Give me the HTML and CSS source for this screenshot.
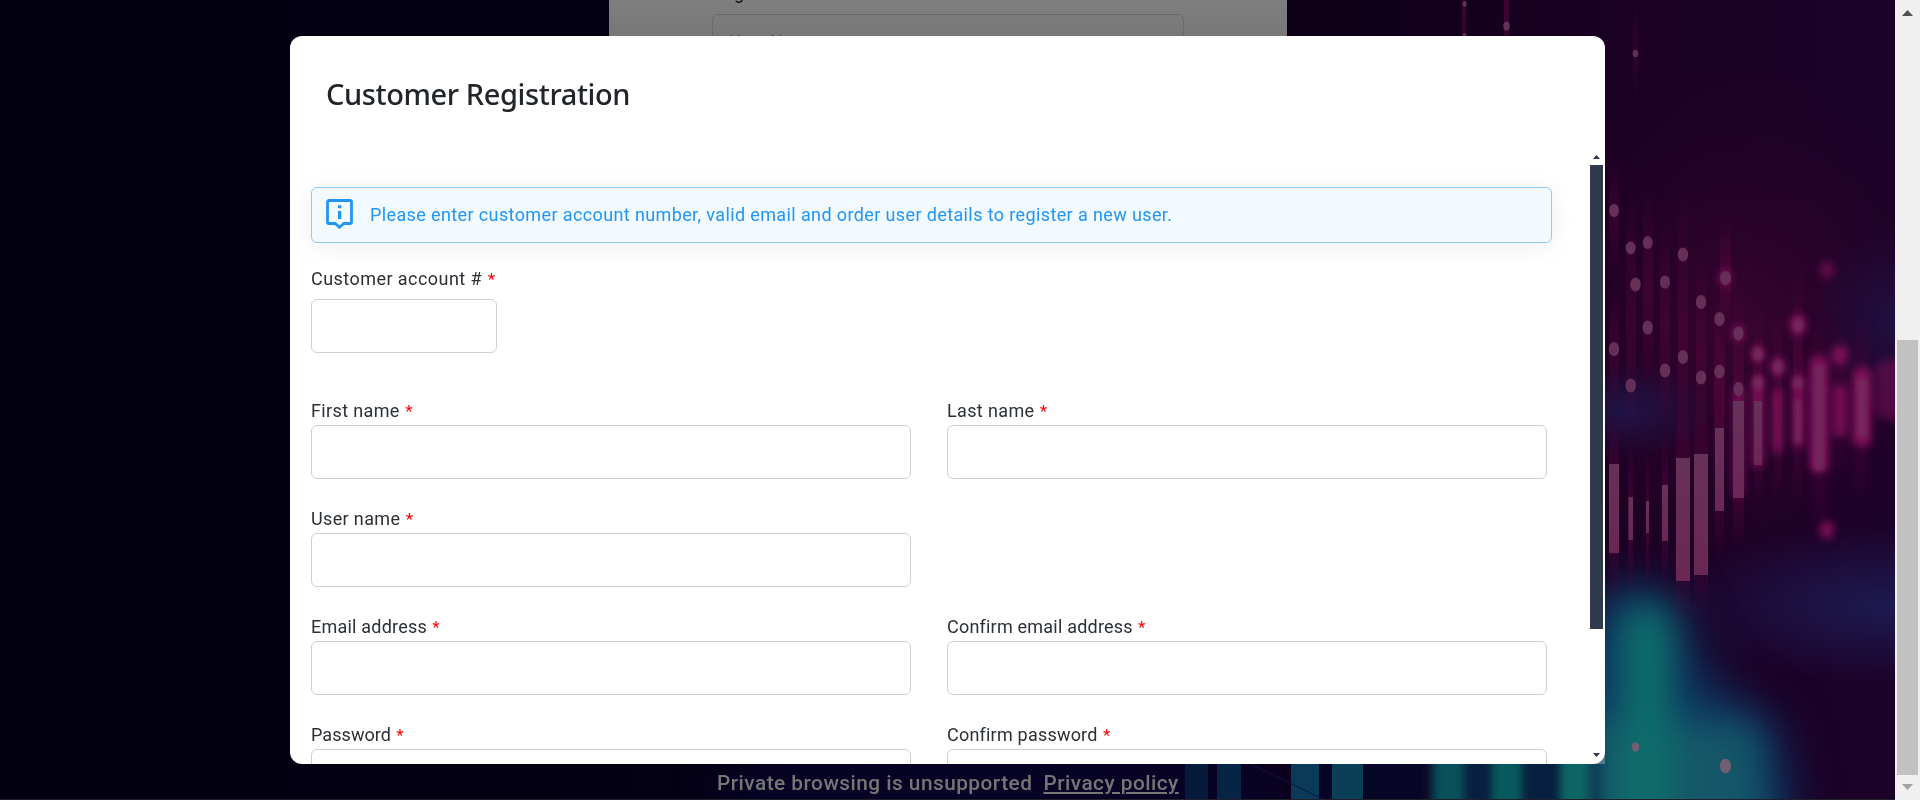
FILE: index.html
```html
<!DOCTYPE html>
<html lang="en">
<head>
<meta charset="utf-8">
<title>Customer Registration</title>
<link rel="stylesheet" href="styles.css">
</head>
<body>
<div class="viewport">
  <div class="page">
    <svg class="backdrop" viewBox="0 0 1895 800" width="1895" height="800" aria-hidden="true">
      <defs>
        <linearGradient id="base" x1="0" x2="1" y1="0" y2="0">
          <stop offset="0" stop-color="#030012"/><stop offset=".33" stop-color="#040013"/><stop offset=".7" stop-color="#0e0019"/><stop offset=".86" stop-color="#1b0024"/><stop offset="1" stop-color="#1c0229"/>
        </linearGradient>
        <linearGradient id="streak" x1="0" x2="0" y1="0" y2="1">
          <stop offset="0" stop-color="#5a0640" stop-opacity="0"/><stop offset=".5" stop-color="#5a0640" stop-opacity=".6"/><stop offset="1" stop-color="#5a0640" stop-opacity="0"/>
        </linearGradient>
        <linearGradient id="bar" x1="0" x2="0" y1="0" y2="1">
          <stop offset="0" stop-color="#663158"/><stop offset="1" stop-color="#6b2754"/>
        </linearGradient>
        <radialGradient id="wine"><stop offset="0" stop-color="#36042f"/><stop offset="1" stop-color="#2a0228" stop-opacity="0"/></radialGradient>
        <radialGradient id="indigo"><stop offset="0" stop-color="#1d1a50"/><stop offset="1" stop-color="#1d1a50" stop-opacity="0"/></radialGradient>
        <filter id="b2" color-interpolation-filters="sRGB" filterUnits="userSpaceOnUse" x="1700" y="200" width="260" height="400"><feGaussianBlur stdDeviation="2.2"/></filter>
        <filter id="b4" color-interpolation-filters="sRGB" filterUnits="userSpaceOnUse" x="1380" y="200" width="560" height="640"><feGaussianBlur stdDeviation="4"/></filter>
        <filter id="b16" color-interpolation-filters="sRGB" filterUnits="userSpaceOnUse" x="500" y="450" width="1450" height="500"><feGaussianBlur stdDeviation="17"/></filter>
        <filter id="b30" color-interpolation-filters="sRGB" filterUnits="userSpaceOnUse" x="1300" y="400" width="700" height="600"><feGaussianBlur stdDeviation="24"/></filter>
      </defs>
      <rect width="1895" height="800" fill="url(#base)"/>
      <ellipse cx="1740" cy="330" rx="230" ry="270" fill="url(#wine)"/>
      <ellipse cx="1900" cy="320" rx="90" ry="90" fill="url(#indigo)" opacity=".6"/>
      <ellipse cx="1890" cy="605" rx="230" ry="80" fill="url(#indigo)"/>
      <ellipse cx="1625" cy="410" rx="85" ry="48" fill="url(#indigo)" opacity=".75"/>
      <ellipse cx="1000" cy="790" rx="300" ry="50" fill="#06052c" opacity=".7" filter="url(#b16)"/>
      <g filter="url(#b30)">
        <path d="M1540 900V700L1605 585H1665L1710 680L1780 730L1800 900Z" fill="#0d3560"/>
      </g>
      <g filter="url(#b16)">
        <path d="M1580 900V720H1690L1755 725L1775 900Z" fill="#155768"/>
        <rect x="1620" y="605" width="52" height="300" rx="22" fill="#0e6e6b"/>
      </g>
      <g fill="url(#streak)">
        <rect x="1462" y="-30" width="4" height="90"/><rect x="1504" y="-60" width="5" height="140"/>
        <rect x="1633" y="0" width="5" height="102" opacity=".5"/>
        <rect x="1609" y="155" width="10" height="120" opacity=".6"/><rect x="1609" y="290" width="10" height="120" opacity=".6"/>
        <rect x="1626" y="190" width="10" height="260" opacity=".6"/><rect x="1643" y="190" width="10" height="200" opacity=".7"/>
        <rect x="1660" y="225" width="10" height="200" opacity=".7"/><rect x="1678" y="190" width="10" height="290" opacity=".7"/>
        <rect x="1696" y="245" width="10" height="220" opacity=".7"/><rect x="1720" y="220" width="11" height="110"/>
        <rect x="1714" y="290" width="11" height="190"/><rect x="1733" y="280" width="11" height="240"/>
        <rect x="1753" y="300" width="10" height="210"/><rect x="1773" y="310" width="9" height="190"/>
        <rect x="1793" y="265" width="10" height="240"/>
        <rect x="1609" y="410" width="10" height="190"/><rect x="1628" y="440" width="5" height="155"/>
        <rect x="1646" y="450" width="3" height="140"/><rect x="1662" y="430" width="6" height="160"/>
        <rect x="1676" y="400" width="14" height="225"/><rect x="1694" y="400" width="14" height="220"/>
        <rect x="1715" y="370" width="9" height="190"/><rect x="1733" y="370" width="11" height="180"/>
      </g>
      <g fill="url(#streak)" filter="url(#b4)">
        <rect x="1812" y="310" width="14" height="230"/><rect x="1834" y="320" width="12" height="160"/><rect x="1854" y="315" width="14" height="190"/>
      </g>
      <g fill="#82105b" filter="url(#b4)">
        <rect x="1810" y="356" width="18" height="116" rx="6"/><rect x="1853" y="368" width="18" height="78" rx="6"/>
        <rect x="1834" y="386" width="12" height="50" opacity=".9"/><rect x="1876" y="360" width="44" height="60" rx="10" opacity=".5"/>
        <rect x="1773" y="390" width="9" height="62"/><rect x="1793" y="385" width="10" height="62"/>
        <rect x="1753" y="380" width="10" height="86"/><rect x="1733" y="387" width="11" height="108" opacity=".7"/>
        <ellipse cx="1827" cy="270" rx="7" ry="9" opacity=".7"/><ellipse cx="1840" cy="355" rx="8" ry="10"/>
        <ellipse cx="1827" cy="530" rx="7" ry="9"/><ellipse cx="1798" cy="325" rx="8" ry="11"/>
        <ellipse cx="1758" cy="354" rx="6" ry="9"/><ellipse cx="1778" cy="367" rx="7" ry="10"/>
        <ellipse cx="1758" cy="383" rx="6" ry="9"/><ellipse cx="1798" cy="383" rx="6" ry="9"/>
        <ellipse cx="1738" cy="333" rx="6" ry="8"/><ellipse cx="1725" cy="278" rx="6" ry="8"/>
      </g>
      <g fill="#72285a" filter="url(#b2)">
        <rect x="1814" y="366" width="10" height="104"/><rect x="1857" y="379" width="10" height="58"/>
        <rect x="1795" y="400" width="6" height="42"/>
        <ellipse cx="1798" cy="325" rx="5" ry="7"/><ellipse cx="1798" cy="383" rx="5" ry="6"/>
        <ellipse cx="1778" cy="367" rx="5" ry="7"/><ellipse cx="1758" cy="354" rx="5" ry="7"/>
        <ellipse cx="1758" cy="383" rx="5" ry="7"/>
      </g>
      <g fill="url(#bar)">
        <rect x="1609" y="464" width="10" height="89"/><rect x="1628.5" y="497" width="4.5" height="43"/>
        <rect x="1646" y="501" width="3" height="32"/><rect x="1662" y="485" width="6" height="56"/>
        <rect x="1676" y="458" width="14" height="123"/><rect x="1694" y="454" width="14" height="121"/>
        <rect x="1715" y="428" width="9" height="83"/><rect x="1733" y="401" width="11" height="97"/>
        <rect x="1754" y="401" width="8" height="64"/>
      </g>
      <g fill="#652f57">
        <ellipse cx="1464.5" cy="4" rx="2" ry="3"/><ellipse cx="1464.5" cy="36" rx="2" ry="3"/>
        <ellipse cx="1506.5" cy="26" rx="3.2" ry="4.5"/><ellipse cx="1635.5" cy="53.5" rx="2.8" ry="3.8"/>
        <ellipse cx="1614" cy="210.5" rx="5" ry="6.4"/><ellipse cx="1630.7" cy="248" rx="5" ry="6.4"/>
        <ellipse cx="1647.7" cy="242.5" rx="5" ry="6.4"/><ellipse cx="1665" cy="282" rx="5" ry="6.6"/>
        <ellipse cx="1683" cy="254.5" rx="5.2" ry="7"/><ellipse cx="1635.5" cy="284.5" rx="5.3" ry="7"/>
        <ellipse cx="1647.7" cy="327.5" rx="5.2" ry="7"/><ellipse cx="1701" cy="302" rx="5.2" ry="7"/>
        <ellipse cx="1725.5" cy="278" rx="5.4" ry="7"/><ellipse cx="1719.5" cy="319" rx="5.2" ry="7"/>
        <ellipse cx="1738.5" cy="333.5" rx="5" ry="7"/><ellipse cx="1614" cy="349" rx="5.2" ry="7"/>
        <ellipse cx="1683" cy="357" rx="5.2" ry="7"/><ellipse cx="1665" cy="370.5" rx="5.2" ry="7"/>
        <ellipse cx="1701" cy="377.5" rx="5.2" ry="7"/><ellipse cx="1719.5" cy="371.5" rx="5.2" ry="7"/>
        <ellipse cx="1630.7" cy="385.5" rx="5.2" ry="7"/><ellipse cx="1738.5" cy="389" rx="5" ry="7"/>
      </g>
      <g fill="#706070">
        <ellipse cx="1635.5" cy="747" rx="3.7" ry="4.8"/><ellipse cx="1725.5" cy="766" rx="5.5" ry="7.3"/>
      </g>
      <rect x="1185" y="764" width="23" height="36" fill="#061a3c"/><rect x="1217" y="764" width="24" height="36" fill="#062445"/>
      <rect x="1291" y="764" width="28" height="36" fill="#093a57"/><rect x="1319" y="764" width="13" height="36" fill="#060525"/>
      <rect x="1332" y="764" width="31" height="36" fill="#0b3f57"/>
      <rect x="1364" y="764" width="60" height="36" fill="#080626"/>
      <path d="M1250 764L1325 800" stroke="#0b1546"/>
      <g filter="url(#b4)">
        <rect x="1428" y="740" width="172" height="90" fill="#07203f"/>
        <rect x="1434" y="740" width="30" height="90" fill="#09505a"/><rect x="1492" y="740" width="30" height="90" fill="#08595d"/>
        <rect x="1560" y="740" width="28" height="90" fill="#0c6564"/><rect x="1588" y="740" width="14" height="90" fill="#0e4059"/>
      </g>
      <rect x="1593" y="752" width="12" height="12" fill="#567a8e"/>
      <rect y="799" width="1895" height="1" fill="#20202c"/>
    </svg>
    <div class="login">
      <span class="login-text">Login</span>
      <div class="login-input">User Name</div>
    </div>
    <footer class="footer">
      <span>Private browsing is unsupported</span>
      <a class="foot-link">Privacy policy</a>
    </footer>
    <section class="modal">
      <h1 class="modal-title">Customer Registration</h1>
      <div class="modal-body">
        <div class="form">
          <div class="alert">
            <svg class="alert-icon" viewBox="0 0 27 30" width="27" height="30"><path d="M3 1.5H24a1.5 1.5 0 0 1 1.5 1.5V23a1.5 1.5 0 0 1-1.5 1.5H17.8L13.5 28.3L9.2 24.5H3A1.5 1.5 0 0 1 1.5 23V3A1.5 1.5 0 0 1 3 1.5Z" fill="none" stroke="#2196f3" stroke-width="2.8"/><path d="M12 6.3h3.3v3H12zM12 12h3.3v8H12z" fill="#2196f3"/></svg>
            <span class="alert-text">Please enter customer account number, valid email and order user details to register a new user.</span>
          </div>
          <div class="field account"><label><span>Customer account #</span> <b>*</b></label><div class="input"></div></div>
          <div class="grid">
            <div class="field name"><label><span>First name</span> <b>*</b></label><div class="input"></div></div>
            <div class="field name"><label><span>Last name</span> <b>*</b></label><div class="input"></div></div>
            <div class="field name wide"><label><span>User name</span> <b>*</b></label><div class="input"></div></div>
            <div class="field"><label><span>Email address</span> <b>*</b></label><div class="input"></div></div>
            <div class="field"><label><span>Confirm email address</span> <b>*</b></label><div class="input"></div></div>
            <div class="field password"><label><span>Password</span> <b>*</b></label><div class="input"></div></div>
            <div class="field"><label><span>Confirm password</span> <b>*</b></label><div class="input"></div></div>
          </div>
        </div>
        <div class="inner-scroll">
          <svg width="13" height="13"><path d="M3 7L6.5 3L10 7Z" fill="#2f3a4d"/></svg>
          <div class="inner-thumb"></div>
          <svg width="13" height="13"><path d="M3 2H10L6.5 6Z" fill="#2f3a4d"/></svg>
        </div>
      </div>
    </section>
  </div>
  <div class="scrollbar">
    <svg width="25" height="22"><path d="M7 16L12.5 10L18 16Z" fill="#505050"/></svg>
    <div class="thumb"></div>
    <svg width="25" height="25"><path d="M7 9H18L12.5 15Z" fill="#a3a3a3"/></svg>
  </div>
</div>
</body>
</html>
```
FILE: styles.css
```css
* { box-sizing: border-box; }
body { margin: 0; background: #030012; font-family: Roboto, "Liberation Sans", sans-serif; overflow: hidden; }
.viewport { display: flex; width: 1920px; height: 800px; }
.page { position: relative; flex: 1; height: 800px; overflow: hidden; display: flex; flex-direction: column; align-items: center; }
.backdrop { position: absolute; inset: 0; }
.login { position: absolute; left: 609px; top: 0; width: 678px; height: 60px; padding: 14px 103px 0; background: linear-gradient(#7f7f7f, #777 36px); }
.login-text { position: absolute; left: 105px; top: -18px; font-size: 18px; line-height: 22px; color: #101219; }
.login-input { height: 54px; padding: 15px 16px; border: 1px solid #696969; border-radius: 6px; font-size: 18px; line-height: 24px; color: #3b3d40; }
.footer { position: absolute; left: 717px; top: 769px; display: flex; gap: 11px; font-size: 20.8px; line-height: 28px; letter-spacing: .48px; color: #767676; font-weight: 500; white-space: nowrap; }
.foot-link { text-decoration: underline; text-decoration-thickness: 2px; text-underline-offset: 2px; }
.modal { position: relative; width: 1315px; height: 728px; margin-top: 36px; background: #fff; border-radius: 12px; overflow: hidden; display: flex; flex-direction: column; }
.modal-title { margin: 0; padding: 38px 36px 0; height: 116px; font: 500 29px/40px "Noto Sans", "Open Sans", sans-serif; letter-spacing: -.4px; color: #212529; }
.modal-body { display: flex; justify-content: space-between; flex: 1; min-height: 0; padding: 0 2px 0 21px; }
.form { width: 1241px; padding-top: 35px; }
.alert { display: flex; align-items: flex-start; height: 56px; padding: 11px 14px; gap: 17px; background: #f2f9ff; border: 1px solid #90caf9; border-radius: 6px; box-shadow: 0 4px 24px rgba(0,0,0,.07); }
.alert-text { font-size: 18px; line-height: 32px; letter-spacing: .38px; color: #2196f3; white-space: nowrap; }
.field label { display: block; height: 28px; font-size: 18px; line-height: 27px; letter-spacing: .21px; color: #2b3035; white-space: nowrap; }
.field b { margin-left: .6px; color: #f00; font-size: 17px; font-weight: 400; }
.name label { letter-spacing: .36px; }
.password label { letter-spacing: .07px; }
.input { height: 54px; border: 1px solid #cfcfcf; border-radius: 6px; background: #fff; }
.account { padding-top: 22px; }
.account label { height: 34px; line-height: 27px; letter-spacing: .45px; }
.account .input { width: 186px; }
.grid { display: grid; grid-template-columns: 600px 600px; gap: 26px 36px; padding-top: 44px; }
.wide { grid-column: span 2; }
.wide .input { width: 600px; }
.inner-scroll { width: 13px; display: flex; flex-direction: column; }
.inner-scroll svg, .scrollbar svg { display: block; flex: none; }
.inner-thumb { height: 464px; margin-bottom: auto; background: #2f3a4d; }
.scrollbar { width: 25px; background: #f0f0f0; display: flex; flex-direction: column; }
.thumb { width: 21px; height: 435px; margin: auto 2px 0; background: #c1c1c1; }
```
